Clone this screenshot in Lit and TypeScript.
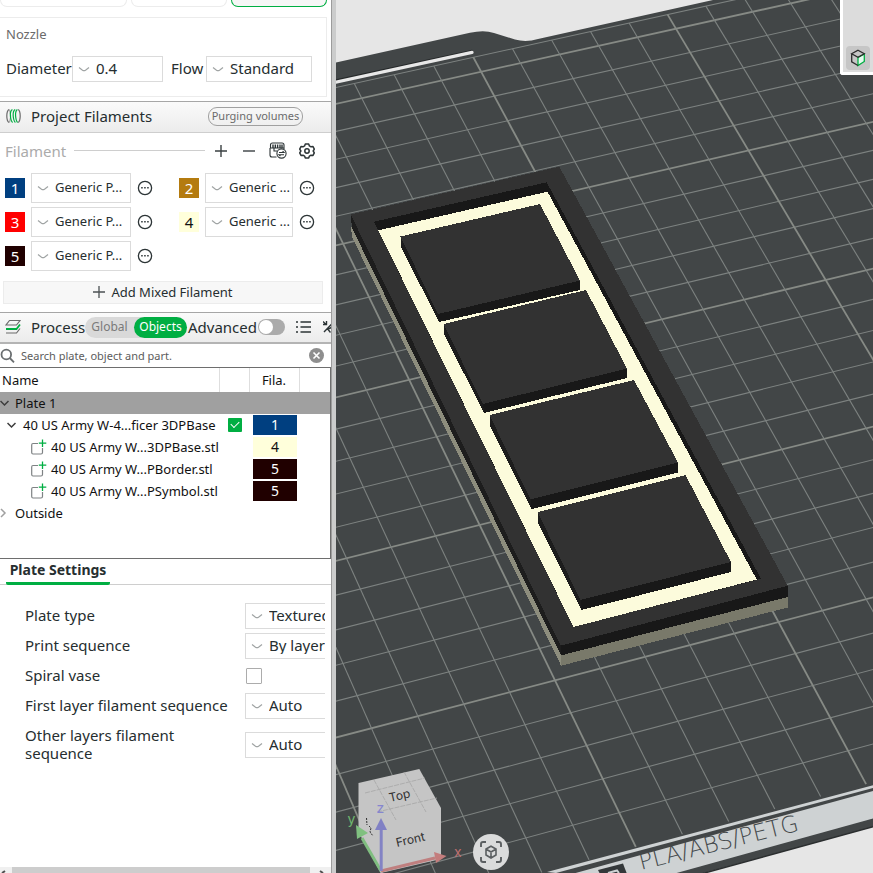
import { LitElement, html, svg, css } from "lit";
import { customElement, property, state } from "lit/decorators.js";
import { classMap } from "lit/directives/class-map.js";

@customElement("choice-box")
class ChoiceBox extends LitElement {
  @property() value = "";
  @property() label = "";

  static styles = css`
    :host {
      display: block;
      position: relative;
      box-sizing: border-box;
      height: 26px;
      font-size: 15px;
    }
    .select {
      appearance: none;
      box-sizing: border-box;
      width: 100%;
      height: 100%;
      margin: 0;
      padding: 0 2px 2px 23px;
      border: 1px solid #dbdbdb;
      border-radius: 0;
      background: #fff;
      color: #262e30;
      font: inherit;
      white-space: nowrap;
    }
    .arrow {
      position: absolute;
      left: 6px;
      top: 50%;
      margin-top: -4px;
      width: 12px;
      height: 9px;
      color: #a0a4a4;
      pointer-events: none;
    }
  `;

  render() {
    return html`
      <select class="select" aria-label=${this.label}>
        <option>${this.value}</option>
      </select>
      <svg class="arrow" viewBox="0 0 12 9">
        <path d="M1 2.5 L4.5 5.2 Q6 6.2 7.5 5.2 L11 2.5" fill="none" stroke="currentColor" stroke-width="1.2"/>
      </svg>
    `;
  }
}

type Point = [number, number];

/* Build plate seen in perspective: maps plate cells to view coordinates. */
function project(col: number, row: number): Point {
  const u = col / 10;
  const v = row / 20;
  const w = 1 + 0.02539 * u - 0.12237 * v;
  return [(281.2 + 412 * u + 205.9 * v) / w, (116 - 86.57 * u + 481.1 * v) / w];
}

function gridLine(a: Point, b: Point, bold: boolean) {
  return svg`<line class=${bold ? "major" : "minor"} x1=${a[0].toFixed(1)} y1=${a[1].toFixed(1)}
    x2=${b[0].toFixed(1)} y2=${b[1].toFixed(1)}></line>`;
}

const FIRST_ROW = -0.6;
const LAST_ROW = 25;

function plateGrid() {
  const lines = [gridLine(project(-12, FIRST_ROW), project(22, FIRST_ROW), false)];
  for (let row = 0; row < LAST_ROW; row++) {
    lines.push(gridLine(project(-12, row), project(22, row), row % 5 === 0));
  }
  for (let col = -12; col <= 22; col++) {
    lines.push(gridLine(project(col, FIRST_ROW), project(col, LAST_ROW), col % 5 === 0));
  }
  return lines;
}

const BLOCKS = [
  { top: "400.5,236.5 540,204 580,280.5 438,314", front: "438,313 580,279.5 580,290 439,322", side: "400.5,236.5 439,313 439,322 401,247" },
  { top: "443.5,324 586,290 627,368.5 483,404", front: "483,403 627,367.5 627,378 484,413", side: "443.5,324 484,403 484,413 444,334" },
  { top: "489.5,415 634,380 678,462.5 530.5,499.5", front: "530.5,498.5 678,461.5 678,472.5 531.5,509", side: "489.5,415 531.5,498.5 531.5,509 490,426" },
  { top: "537.5,512 685.5,475 731,562 580.5,600", front: "580.5,599 731,561 731,572 581.5,610", side: "537.5,512 581.5,599 581.5,610 538,523" },
];

@customElement("plate-view")
class PlateView extends LitElement {
  static styles = css`
    :host {
      display: block;
      position: relative;
      overflow: hidden;
      background: #e6e6e6;
      font-family: Inter, "Noto Sans", sans-serif;
    }
    .scene {
      display: block;
      width: 100%;
      height: 100%;
    }
    .minor {
      stroke: #7d8280;
      stroke-width: 1.1;
    }
    .major {
      stroke: #868a85;
      stroke-width: 1.8;
    }
    .plate { fill: #424647; }
    .print { fill: #ced2d3; }
    .top { fill: #323232; }
    .front { fill: #181818; }
    .side { fill: #1d1d1d; }
    .cream { fill: #fcfbdc; }
    .caption {
      font-family: "DejaVu Sans", sans-serif;
      font-weight: 200;
      font-size: 23px;
      fill: #44494b;
    }
    .face {
      font-size: 12px;
      fill: #303030;
    }
    .axis { font-size: 14px; }
    .tools {
      position: absolute;
      top: 0;
      right: 0;
      display: flex;
      align-items: flex-end;
      justify-content: center;
      box-sizing: border-box;
      width: 33px;
      height: 75px;
      padding: 0 3px 2px 3px;
      border: solid #fff;
      border-width: 0 0 3px 3px;
      border-radius: 0 0 0 3px;
      background: #dcdcdc;
    }
    .tool {
      display: flex;
      align-items: center;
      justify-content: center;
      flex: none;
      width: 24px;
      height: 24px;
      padding: 0;
      border: 0;
      border-radius: 4px;
      background: #c6c6c6;
    }
    .fit {
      position: absolute;
      left: 137px;
      bottom: 3px;
      display: flex;
      align-items: center;
      justify-content: center;
      width: 36px;
      height: 36px;
      padding: 0;
      border: 0;
      border-radius: 50%;
      background: #dadbdb;
    }
  `;

  render() {
    return html`
      <svg class="scene" viewBox="336 0 537 873" preserveAspectRatio="xMinYMin slice">
        <path class="plate" d="M320 66 L470 32.8 Q484 29.5 494 33 L515 39.5 Q526 42.5 538 39 L713 0 L900 0 L900 820 L700 874 L320 975 Z"/>
        <path d="M703 874 L873 826.8 L890 822 L890 874 Z" fill="#e6e6e6"/>
        <path d="M703 873.5 L880 824.8" stroke="#2b2e2f" stroke-width="1.4"/>
        ${plateGrid()}
        <path d="M330 82.4 L471.5 51.6" stroke="#26292a" stroke-width="3.4" stroke-linecap="round"/>
        <path d="M330 83.4 L472 52.4" stroke="#e8e8e8" stroke-width="3.2" stroke-linecap="round"/>
        <path class="print" d="M547 872 L873 785.2 L873 788 L556 873 Z"/>
        <path class="print" d="M572 874 L873 791 L873 818.5 L673 874 Z"/>
        <path d="M598 870 L623 863.5 L627 874 L600 874 Z" fill="#34383a"/>
        <path d="M608 873 L617 870.5 L619 873" fill="none" stroke="#ced2d3" stroke-width="2"/>
        <text class="caption" transform="translate(641 870) rotate(-14)">PLA/ABS/PETG</text>

        <g shape-rendering="crispEdges">
          <polygon fill="#8d8d7d" points="351,226 352,237 561,665.5 561,655"/>
          <polygon fill="#79796a" points="560.7,655 787.7,596.5 787.7,607.5 561,665.7"/>
          <polygon class="side" points="350.7,214.5 561,645.5 561,655.5 352,228"/>
          <polygon class="front" points="560.7,645.5 787.7,585.5 787.7,597 560.7,655.5"/>
          <polygon class="top" points="350.7,214.5 559.3,166.7 787.7,585.7 560.7,645.7"/>
          <polygon class="front" points="374,221.7 546.7,182.3 761,578.7 573.3,626.7"/>
          <polygon class="cream" points="378.3,230.3 547.5,191.7 756.7,579.5 573.5,627"/>
          ${BLOCKS.map((b) => svg`
            <polygon class="side" points=${b.side}></polygon>
            <polygon class="front" points=${b.front}></polygon>
            <polygon class="top" points=${b.top}></polygon>`)}
        </g>

        <path d="M358.5 783 L419.3 769 L441 808 V859 L380.7 873 L358.5 832 Z" fill="#c5c5c5"/>
        <path d="M365 793 L425 778 M377 812 L437 798 M374 780 L396 820 M404 772 L426 812"
          stroke="#a6a6a6" stroke-width="0.8" stroke-dasharray="5 1" fill="none"/>
        <text class="face" transform="translate(390 802) rotate(-13)">Top</text>
        <text class="face" transform="translate(397 847) rotate(-13)">Front</text>
        <path d="M366.5 818 L367 825 M369 826 L371 828 L370 832 L373 836" stroke="#303030" stroke-width="1" stroke-dasharray="2 1" fill="none"/>
        <path d="M381 871 L362 838" stroke="#80be80" stroke-width="3"/>
        <polygon points="356,825 368,833 357,839" fill="#80c080"/>
        <path d="M381 871 L435 858" stroke="#bf7f7f" stroke-width="3"/>
        <polygon points="434,852 446.5,856 436,863" fill="#c47d7d"/>
        <path d="M381.2 871 V829" stroke="#8383c4" stroke-width="3"/>
        <polygon points="381,818 387,830 375,830" fill="#8080c4"/>
        <text class="axis" x="376.5" y="813" fill="#8686cf">z</text>
        <text class="axis" x="347.5" y="824" fill="#6fb96f">y</text>
        <text class="axis" x="454" y="857" fill="#bd6f6f">x</text>
      </svg>
      <div class="tools">
        <button class="tool" aria-label="Assembly view">
          <svg width="16" height="18" viewBox="0 0 16 18" fill="none" stroke-width="1.3">
            <path d="M8 8.5 L14.3 5 V12.5 L8 16.5 Z" fill="#e4fbee" stroke="#00ae42"/>
            <path d="M8 1.3 L14.3 4.8 L8 8.3 L1.7 4.8 Z M1.7 4.8 V12.8 L8 16.5" stroke="#2c2c2c"/>
          </svg>
        </button>
      </div>
      <button class="fit" aria-label="Fit to view">
        <svg width="24" height="24" viewBox="0 0 24 24" fill="none" stroke="#5b5f61" stroke-width="1.9">
          <path d="M2 7 V4 Q2 2 4 2 H7 M17 2 H20 Q22 2 22 4 V7 M22 17 V20 Q22 22 20 22 H17 M7 22 H4 Q2 22 2 20 V17"/>
          <path d="M12 6.2 L17 9 V15 L12 18 L7 15 V9 Z M7.3 9.3 L12 12 L16.7 9.3 M12 12 V17.6" stroke-width="1.6"/>
        </svg>
      </button>
    `;
  }
}

interface Filament { id: number; color: string; name: string; dark?: boolean }

const FILAMENTS: Filament[] = [
  { id: 1, color: "#003f80", name: "Generic P..." },
  { id: 2, color: "#b47b0f", name: "Generic ..." },
  { id: 3, color: "#ff0000", name: "Generic P..." },
  { id: 4, color: "#ffffdb", name: "Generic ...", dark: true },
  { id: 5, color: "#200000", name: "Generic P..." },
];

const PARTS = [
  { name: "40 US Army W...3DPBase.stl", filament: 4 },
  { name: "40 US Army W...PBorder.stl", filament: 5 },
  { name: "40 US Army W...PSymbol.stl", filament: 5 },
];

@customElement("app-root")
class AppRoot extends LitElement {
  @state() private scope = "Objects";

  static styles = css`
    :host {
      display: flex;
      height: 100vh;
      overflow: hidden;
      background: #fff;
      color: #262e30;
      font-family: "Noto Sans", "Open Sans", sans-serif;
      font-size: 15px;
      line-height: 18px;
    }
    button { font: inherit; color: inherit; padding: 0; margin: 0; border: 0; background: none; }
    svg { display: block; flex: none; }
    .panel {
      display: flex;
      flex-direction: column;
      flex: none;
      width: 331px;
      overflow: hidden;
    }
    .splitter {
      flex: none;
      box-sizing: border-box;
      width: 5px;
      border-left: 1px solid #9c9c9c;
      background: #cbcccc;
    }
    .view { flex: 1; min-width: 0; }

    .cards {
      display: grid;
      grid-template-columns: 127px 96px 96px;
      gap: 4px;
      height: 7px;
      margin-bottom: 10px;
    }
    .card {
      border: 1px solid #ececec;
      border-top: 0;
      border-radius: 0 0 8px 8px;
    }
    .card.active { border-color: #00ae42; background: #f6f6f6; }

    .nozzle {
      box-sizing: border-box;
      height: 80px;
      margin-right: 4px;
      padding: 6px 14px 0 6px;
      border: 1px solid #ececec;
      border-left: 0;
    }
    .nozzle-title { font-size: 13px; color: #6b6b6b; line-height: 20px; }
    .nozzle-row { display: flex; align-items: center; margin-top: 12px; white-space: nowrap; }
    .field-a { width: 66px; padding-bottom: 2px; }
    .field-b { width: 35px; margin-left: 8px; padding-bottom: 2px; }
    .box-a { width: 91px; }
    .box-b { width: 106px; }

    .section {
      display: flex;
      align-items: center;
      box-sizing: border-box;
      flex: none;
      height: 32px;
      border-top: 1px solid #a6a6a6;
      border-bottom: 1px solid #cecece;
      background: linear-gradient(#fafafa, #ececec);
      white-space: nowrap;
    }
    .section.filaments { margin-top: 4px; padding: 0 28px 2px 6px; }
    .section-title { flex: 1; margin: 0 0 0 10px; font-size: 15px; font-weight: 400; }
    .pill {
      box-sizing: border-box;
      width: 95px;
      height: 19px;
      border: 1px solid #a0a0a0;
      border-radius: 9px;
      color: #6b6b6b;
      font-size: 11px;
      line-height: 16px;
      white-space: nowrap;
    }

    .bar { display: flex; align-items: center; height: 35px; padding: 0 16px 0 5px; color: #ababab; }
    .rule { flex: 1; height: 1px; margin: 0 8px; background: #cecece; }
    .icons { display: flex; align-items: center; gap: 12px; color: #3a4042; }

    .slots {
      display: grid;
      grid-template-columns: 148px 136px;
      column-gap: 26px;
      row-gap: 4px;
      padding: 5px 0 0 5px;
    }
    .slot { display: flex; align-items: center; height: 30px; }
    .slot choice-box { flex: 1; height: 30px; margin: 0 6px; font-size: 13px; }
    .chip { width: 20px; height: 20px; line-height: 20px; text-align: center; color: #fff; }
    .chip.dark, .tag.dark { color: #111; }
    .mix {
      display: flex;
      align-items: center;
      justify-content: center;
      gap: 6px;
      flex: none;
      box-sizing: border-box;
      height: 23px;
      margin: 10px 8px 8px 3px;
      padding-bottom: 2px;
      border: 1px solid #ececec;
      background: #f7f7f7;
      font-size: 13px;
    }

    .section.process { padding: 0 0 1px 5px; border-bottom: 2px solid #b4b4b4; }
    .process .section-title { flex: none; width: 54px; }
    .scope { display: flex; flex: none; height: 21px; border-radius: 11px; background: #d9d9d9; }
    .seg { height: 21px; padding: 0; border-radius: 11px; width: 49px; color: #7a7a7a; font-size: 12px; text-align: center; }
    .seg.on { width: 53px; background: #00ae42; color: #fff; }
    .advanced { width: 69px; margin-left: 1px; }
    .switch {
      appearance: none;
      flex: none;
      width: 27px;
      height: 16px;
      margin: 0 11px 0 1px;
      border-radius: 8px;
      background: #ababab;
    }
    .switch::before {
      content: "";
      display: block;
      width: 14px;
      height: 14px;
      margin: 1px;
      border-radius: 50%;
      background: #fff;
    }
    .list-icon { margin-right: 12px; }

    .search { display: flex; align-items: center; flex: none; height: 23px; padding-right: 7px; }
    .query {
      flex: 1;
      min-width: 0;
      margin: 0 0 0 5px;
      padding: 0;
      border: 0;
      outline: 0;
      font: inherit;
      font-size: 11px;
      line-height: 18px;
    }
    .query::placeholder { color: #5c5c5c; opacity: 1; }

    .tree {
      flex: none;
      box-sizing: border-box;
      height: 192px;
      border: 1px solid #6e6e6e;
      border-left: 0;
      font-size: 13px;
      color: #111;
    }
    .grid { width: 100%; border-collapse: collapse; table-layout: fixed; white-space: nowrap; }
    .grid th { height: 24px; padding: 0 2px; font-weight: 400; text-align: left; border-right: 1px solid #dedede; }
    .grid th.mid { text-align: center; }
    .grid th:last-child { border-right: 0; }
    .grid td { height: 22px; padding: 0; }
    .c-check { width: 30px; }
    .c-fila { width: 50px; }
    .c-rest { width: 31px; }
    .node { display: flex; align-items: center; height: 22px; }
    .lv0 { gap: 6px; }
    .lv1 { padding-left: 7px; gap: 7px; }
    .lv2 { padding-left: 31px; gap: 4px; }
    .plate-row { background: #a0a0a0; }
    .check {
      appearance: none;
      display: block;
      width: 14px;
      height: 14px;
      margin: 0 0 0 9px;
      border-radius: 1px;
      background: #00ae42;
    }
    .check::before {
      content: "";
      display: block;
      width: 7px;
      height: 4px;
      margin: 3px 0 0 3px;
      border: solid #fff;
      border-width: 0 0 1px 1px;
      rotate: -45deg;
    }
    .tag { width: 44px; height: 20px; margin-left: 4px; line-height: 20px; text-align: center; font-size: 14px; color: #fff; }

    .tabs { display: flex; flex: none; height: 25px; padding-left: 6px; border-bottom: 1px solid #cecece; }
    .tab {
      height: 26px;
      padding: 0 3px 2px;
      width: 104px;
      border-bottom: 3px solid #00ae42;
      border-radius: 0 0 2px 2px;
      font-size: 14px;
      font-weight: 700;
      line-height: 20px;
      white-space: nowrap;
    }

    .settings {
      display: flex;
      flex-direction: column;
      flex: 1;
      gap: 4px;
      min-height: 0;
      margin-right: 6px;
      padding: 18px 0 0 25px;
      overflow: hidden;
    }
    .setting { display: flex; align-items: center; min-height: 26px; flex: none; }
    .setting.tall { min-height: 44px; }
    .setting-name { flex: none; box-sizing: border-box; width: 204px; margin-right: 16px; padding-bottom: 2px; }
    .setting.tall .setting-name { padding-right: 40px; }
    .setting choice-box { flex: none; width: 160px; }
    .box {
      appearance: none;
      width: 16px;
      height: 16px;
      margin: 0 0 0 1px;
      border: 1px solid #acacac;
      border-radius: 1px;
      background: #fff;
    }
    .scroll {
      display: flex;
      justify-content: space-between;
      flex: none;
      height: 6px;
      overflow: hidden;
      background: #f0f0f0;
    }
    .thumb { flex: 1; margin: 0 5px 0 6px; background: #cdcdcd; }
  `;

  private filamentSlot(f: Filament) {
    return html`
      <div class="slot">
        <div class=${classMap({ chip: true, dark: !!f.dark })} style="background:${f.color}">${f.id}</div>
        <choice-box label="Filament ${f.id}" .value=${f.name}></choice-box>
        <button aria-label="Filament ${f.id} options">
          <svg width="16" height="16" viewBox="0 0 16 16">
            <circle cx="8" cy="8" r="6.6" fill="none" stroke="#2c3436" stroke-width="1.3"/>
            <path d="M4.2 7.8 h1.5 M7.2 7.8 h1.5 M10.2 7.8 h1.5" stroke="#2c3436" stroke-width="1.4"/>
          </svg>
        </button>
      </div>
    `;
  }

  private tag(id: number) {
    const f = FILAMENTS[id - 1];
    return html`<div class=${classMap({ tag: true, dark: !!f.dark })} style="background:${f.color}">${id}</div>`;
  }

  private setting(name: string, value: string | null, tall = false) {
    return html`
      <label class=${classMap({ setting: true, tall })}>
        <span class="setting-name">${name}</span>
        ${value === null
          ? html`<input class="box" type="checkbox">`
          : html`<choice-box label=${name} .value=${value}></choice-box>`}
      </label>
    `;
  }

  private twisty(open: boolean) {
    return html`
      <svg width="9" height="10" viewBox="0 0 9 10" fill="none" stroke-width="1.5">
        ${open
          ? svg`<path d="M0.5 3 L4.5 7 L8.5 3" stroke="#3c3c3c"/>`
          : svg`<path d="M1 1 L5 5 L1 9" stroke="#a0a0a0"/>`}
      </svg>
    `;
  }

  render() {
    return html`
      <aside class="panel">
        <div class="cards">
          <div class="card"></div>
          <div class="card"></div>
          <div class="card active"></div>
        </div>

        <div class="nozzle">
          <div class="nozzle-title">Nozzle</div>
          <div class="nozzle-row">
            <span class="field-a">Diameter</span>
            <choice-box class="box-a" label="Diameter" value="0.4"></choice-box>
            <span class="field-b">Flow</span>
            <choice-box class="box-b" label="Flow" value="Standard"></choice-box>
          </div>
        </div>

        <header class="section filaments">
          <svg width="15" height="16" viewBox="0 0 15 16" fill="none" stroke-width="1.2">
            <path d="M3 1.5 Q0.8 3 0.8 8 T3 14.5" stroke="#6b6b6b"/>
            <path d="M3.6 1.5 Q5.8 8 3.6 14.5" stroke="#6b6b6b" stroke-width="0.7"/>
            <path d="M6.4 1.5 Q4 3 4.4 8 T6.6 14.5 M9.2 1.5 Q6.8 3 7.2 8 T9.4 14.5 M11.4 1.5 Q9.2 3 9.6 8 T11.6 14.5" stroke="#00ae42"/>
            <path d="M12.2 1.5 Q14.2 3 14.2 8 T12.2 14.5" stroke="#6b6b6b"/>
          </svg>
          <h2 class="section-title">Project Filaments</h2>
          <button class="pill">Purging volumes</button>
        </header>

        <div class="bar">
          <span>Filament</span>
          <span class="rule"></span>
          <div class="icons">
            <button aria-label="Add filament">
              <svg width="16" height="12" viewBox="0 0 16 12" stroke="currentColor" stroke-width="1.4"><path d="M8 0 V12 M2 6 H14"/></svg>
            </button>
            <button aria-label="Remove filament">
              <svg width="16" height="12" viewBox="0 0 16 12" stroke="currentColor" stroke-width="1.4"><path d="M2 6 H14"/></svg>
            </button>
            <button aria-label="Sync filaments">
              <svg width="18" height="17" viewBox="0 0 18 17" fill="none" stroke="#2c3436" stroke-width="1.1">
                <path d="M1.5 6 V3 Q1.5 1 3.5 1 H13 Q15 1 15 3 V7 M1 6 H15"/>
                <path d="M4 2.5 V6 M6.3 2.5 V6 M8.6 2.5 V6 M11 2.5 V6 M13 2.5 V6" stroke-width="1.4"/>
                <path d="M1 6 V13 Q1 15 3 15 H7.5 M5 6 V9 H8"/>
                <circle cx="12.5" cy="11.5" r="4.6"/>
                <path d="M10 10.5 H15 L13.6 9.2 M15 12.7 H10 L11.4 14"/>
              </svg>
            </button>
            <button aria-label="Filament settings">
              <svg width="16" height="16" viewBox="0 0 16 16" fill="none" stroke="#2c3436" stroke-width="1.5" stroke-linejoin="round">
                <path d="M6.3 1 H9.7 L10.4 2.9 L12 3.8 L14 3.5 L15.3 6.2 L14.2 8 L15.3 9.8 L14 12.4 L12 12.2 L10.4 13.1 L9.7 15 H6.3 L5.6 13.1 L4 12.2 L2 12.4 L0.7 9.8 L1.9 8 L0.7 6.2 L2 3.5 L4 3.8 L5.6 2.9 Z"/>
                <circle cx="8" cy="8" r="2.2"/>
              </svg>
            </button>
          </div>
        </div>

        <div class="slots">${FILAMENTS.map((f) => this.filamentSlot(f))}</div>

        <button class="mix">
          <svg width="12" height="12" viewBox="0 0 12 12" stroke="#4c5254" stroke-width="1.3"><path d="M6 0 V12 M0 6 H12"/></svg>
          <span>Add Mixed Filament</span>
        </button>

        <header class="section process">
          <svg width="16" height="16" viewBox="0 0 16 16" fill="none" stroke-width="1.2">
            <path d="M4.5 1.5 H15 L11.5 6 H1 Z" stroke="#6b6b6b"/>
            <path d="M1 10 H11.5 L15 5.5" stroke="#00ae42" stroke-width="1.8"/>
            <path d="M1 14 H11.5 L15 9.5" stroke="#6b6b6b"/>
          </svg>
          <h2 class="section-title">Process</h2>
          <div class="scope">
            ${["Global", "Objects"].map((s) => html`
              <button class=${classMap({ seg: true, on: this.scope === s })} @click=${() => (this.scope = s)}>${s}</button>`)}
          </div>
          <label class="advanced" for="advanced">Advanced</label>
          <input class="switch" id="advanced" type="checkbox" role="switch">
          <svg class="list-icon" width="15" height="12" viewBox="0 0 15 12" stroke="#2c3436" stroke-width="1.5">
            <path d="M0 1 H2 M4.5 1 H15 M0 6 H2 M4.5 6 H15 M0 11 H2 M4.5 11 H15"/>
          </svg>
          <svg width="14" height="14" viewBox="0 0 14 14" fill="none" stroke="#2c3436" stroke-width="1.4">
            <path d="M0 1.5 L3 4.5 M0 4.5 H3.5 V1 M11 1.5 L1 12 M9 7 L5 9.5 L7.5 12.5"/>
          </svg>
        </header>

        <div class="search">
          <svg width="16" height="16" viewBox="0 0 16 16" fill="none" stroke="#6a6e70" stroke-width="1.8">
            <circle cx="6.3" cy="6.5" r="4.8"/><path d="M9.8 10 L14 14.3"/>
          </svg>
          <input class="query" type="text" aria-label="Search" placeholder="Search plate, object and part.">
          <button aria-label="Clear">
            <svg width="15" height="15" viewBox="0 0 15 15">
              <circle cx="7.5" cy="7.5" r="7.5" fill="#8e8e8e"/>
              <path d="M4.5 4.5 L10.5 10.5 M10.5 4.5 L4.5 10.5" stroke="#fff" stroke-width="1.6"/>
            </svg>
          </button>
        </div>

        <div class="tree">
          <table class="grid">
            <colgroup><col><col class="c-check"><col class="c-fila"><col class="c-rest"></colgroup>
            <thead><tr><th>Name</th><th></th><th class="mid">Fila.</th><th></th></tr></thead>
            <tbody>
              <tr class="plate-row"><td colspan="4"><div class="node lv0">${this.twisty(true)}Plate 1</div></td></tr>
              <tr>
                <td><div class="node lv1">${this.twisty(true)}40 US Army W-4...ficer 3DPBase</div></td>
                <td><input class="check" type="checkbox" checked aria-label="Printable"></td>
                <td>${this.tag(1)}</td>
                <td></td>
              </tr>
              ${PARTS.map((p) => html`
                <tr>
                  <td><div class="node lv2">
                    <svg width="16" height="16" viewBox="0 0 16 16" fill="none">
                      <path d="M7 4.5 H2 Q0.7 4.5 0.7 6 V13.5 Q0.7 15 2 15 H10 Q11.5 15 11.5 13.5 V9" stroke="#7e8284" stroke-width="1.2"/>
                      <path d="M11.5 0.5 V8 M7.8 4.2 H15.3" stroke="#00ae42" stroke-width="1.3"/>
                    </svg>${p.name}</div></td>
                  <td></td>
                  <td>${this.tag(p.filament)}</td>
                  <td></td>
                </tr>`)}
              <tr><td colspan="4"><div class="node lv0">${this.twisty(false)}Outside</div></td></tr>
            </tbody>
          </table>
        </div>

        <nav class="tabs"><button class="tab">Plate Settings</button></nav>

        <div class="settings">
          ${this.setting("Plate type", "Textured PEI Plate")}
          ${this.setting("Print sequence", "By layer")}
          ${this.setting("Spiral vase", null)}
          ${this.setting("First layer filament sequence", "Auto")}
          ${this.setting("Other layers filament sequence", "Auto", true)}
        </div>

        <div class="scroll">
          <svg width="6" height="6" viewBox="0 0 6 6"><path d="M5 4 L2 6" stroke="#505050" stroke-width="2"/></svg>
          <div class="thumb"></div>
          <svg width="16" height="6" viewBox="0 0 16 6"><path d="M5 4 L8 6" stroke="#505050" stroke-width="2"/></svg>
        </div>
      </aside>
      <div class="splitter"></div>
      <plate-view class="view"></plate-view>
    `;
  }
}
